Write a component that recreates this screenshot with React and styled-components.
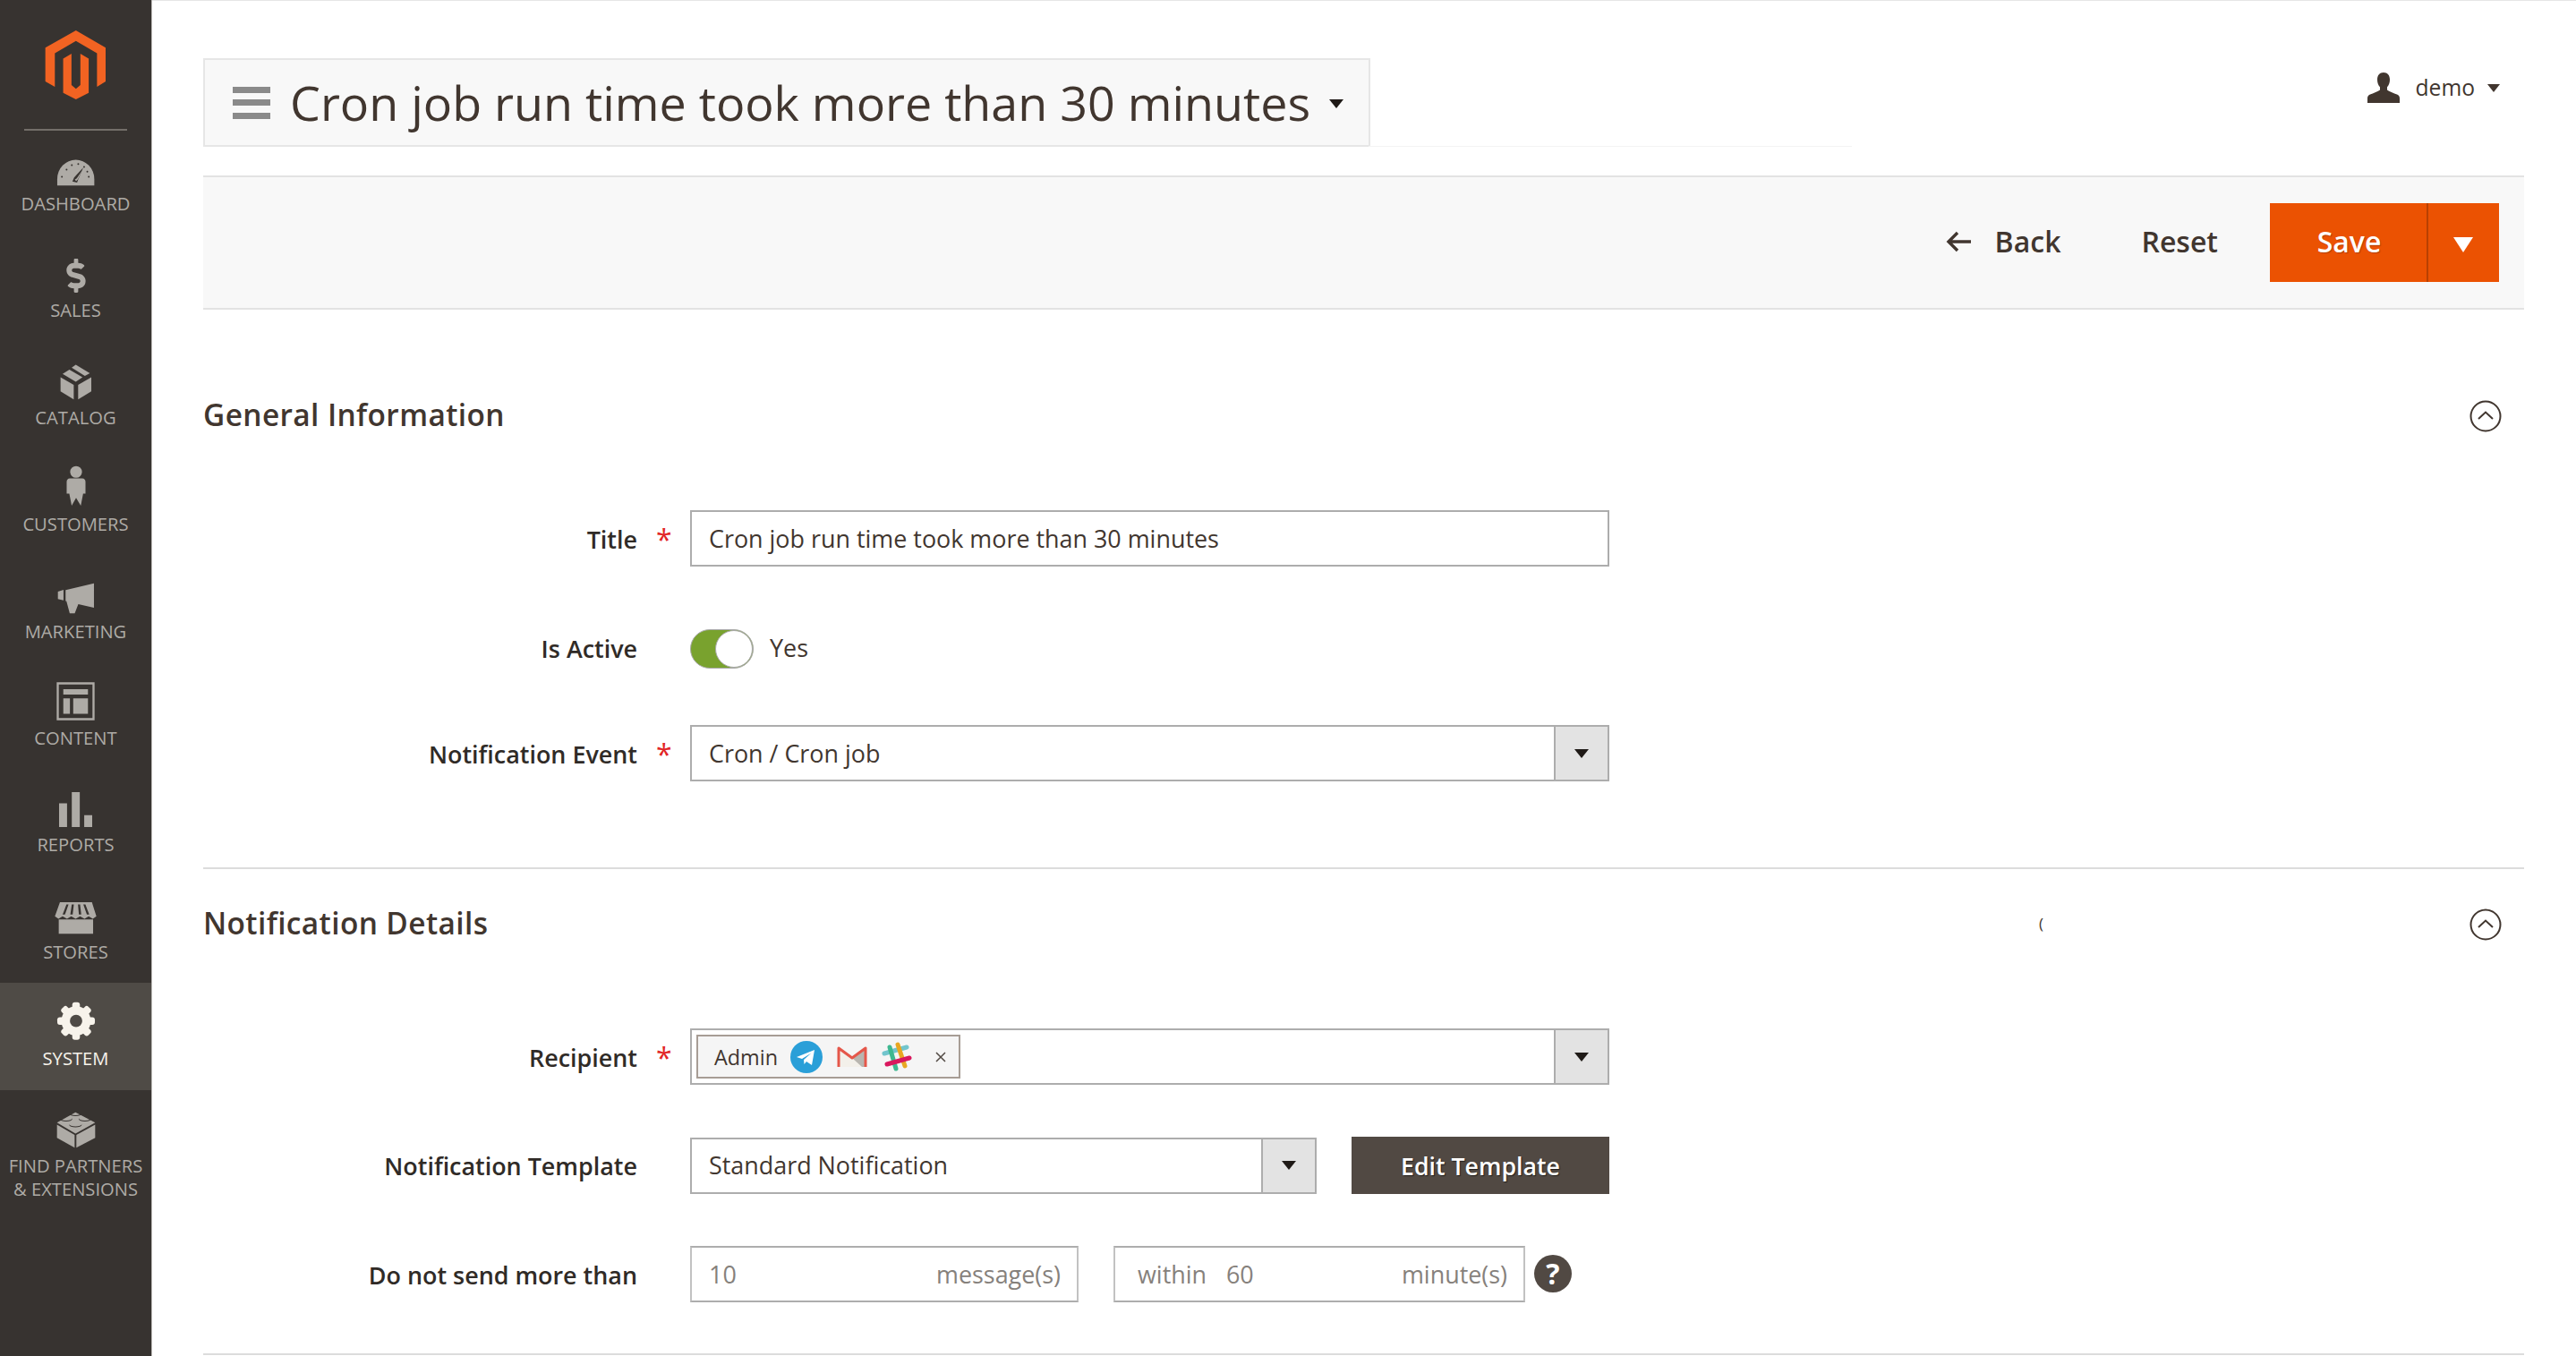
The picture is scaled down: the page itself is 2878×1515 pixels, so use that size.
import React from 'react';
import styled, { createGlobalStyle } from 'styled-components';
import { FaDollarSign } from 'react-icons/fa';

const GlobalStyle = createGlobalStyle`
  html, body {
    margin: 0;
    padding: 0;
    background: #fff;
  }
  body {
    font-family: "Open Sans", "Liberation Sans", sans-serif;
    color: #41362f;
  }
  * {
    box-sizing: border-box;
  }
`;

const Page = styled.div`
  display: flex;
  min-height: 1515px;
  height: 1515px;
  overflow: hidden;
`;

const Sidebar = styled.nav`
  flex: 0 0 170px;
  background: #373330;
  border-right: 1px solid #b9b7b4;
  display: flex;
  flex-direction: column;
  padding-top: 33px;
`;

const LogoWrap = styled.div`
  display: flex;
  justify-content: center;
  padding-right: 1px;
`;

const LogoDivider = styled.div`
  height: 2px;
  flex: none;
  margin: 32px 27px -3px;
  background: #736e69;
`;

const NavItem = styled.div`
  height: 119.4px;
  flex: none;
  display: flex;
  flex-direction: column;
  align-items: center;
  background: ${props => (props.$active ? '#4f4b46' : 'transparent')};
  color: ${props => (props.$active ? '#f7f3eb' : '#aeaba6')};
`;

const NavIcon = styled.div`
  height: 65px;
  flex: none;
  display: flex;
  align-items: flex-end;
  justify-content: center;
`;

const NavLabel = styled.div`
  margin-top: 6px;
  font-size: 20.2px;
  line-height: 26px;
  text-align: center;
  white-space: nowrap;
`;

const Main = styled.main`
  flex: 1;
  min-width: 0;
  padding: 0 58px 0 57px;
  border-top: 1px solid #e6e6e6;
`;

const HeaderRow = styled.header`
  display: flex;
  justify-content: space-between;
  align-items: flex-start;
  height: 195px;
  padding-top: 64px;
`;

const TitleBox = styled.div`
  position: relative;
  width: 1304px;
  height: 99px;
  display: flex;
  align-items: center;
  background: #f8f8f8;
  border: 2px solid #e6e6e6;
  padding-left: 31px;

  &::after {
    content: '';
    position: absolute;
    left: 100%;
    bottom: -2px;
    width: 540px;
    height: 1px;
    background: #f3f3f3;
  }
`;

const MenuBars = styled.div`
  width: 42px;
  height: 36px;
  display: flex;
  flex-direction: column;
  justify-content: space-between;
  margin-right: 22px;
  span {
    display: block;
    height: 7px;
    background: #8a8a8a;
  }
`;

const PageTitle = styled.h1`
  margin: 0 0 2px;
  font-size: 53.8px;
  font-weight: 400;
  line-height: 60px;
  white-space: nowrap;
  color: #41362f;
`;

const Caret = styled.span`
  display: block;
  width: 0;
  height: 0;
  border-left: ${props => props.$size}px solid transparent;
  border-right: ${props => props.$size}px solid transparent;
  border-top: ${props => props.$size * (props.$ratio || 1.25)}px solid ${props => props.$color || '#1f1a17'};
`;

const TitleCaret = styled.div`
  margin-left: 21px;
  margin-top: 2px;
`;

const UserMenu = styled.div`
  display: flex;
  align-items: center;
  margin: 16px 27px 0 0;
  font-size: 24.6px;
  line-height: 34px;
`;

const UserName = styled.span`
  margin: 0 14px 0 18px;
`;

const Toolbar = styled.div`
  height: 150px;
  display: flex;
  align-items: center;
  justify-content: flex-end;
  background: #f8f8f8;
  border-top: 2px solid #e3e3e3;
  border-bottom: 2px solid #e3e3e3;
  padding-right: 28px;
`;

const ToolbarLink = styled.div`
  display: flex;
  align-items: center;
  padding-bottom: 3px;
  font-size: 32px;
  font-weight: 600;
  color: #41362f;
  margin-right: ${props => props.$gap}px;
`;

const BackArrow = styled.svg`
  margin-right: 27px;
`;

const SplitButton = styled.div`
  display: flex;
  height: 88px;
  width: 256px;
  background: #eb5202;
  color: #fff;
`;

const SaveLabel = styled.div`
  flex: 0 0 175px;
  display: flex;
  align-items: center;
  justify-content: center;
  padding: 0 0 3px 2px;
  font-size: 32px;
  font-weight: 600;
  text-shadow: 1px 1px 1px rgba(0, 0, 0, 0.25);
`;

const SaveToggle = styled.div`
  flex: 1;
  display: flex;
  align-items: center;
  justify-content: center;
  border-left: 2px solid #b84002;
  padding: 4px 2px 0 0;
`;

const Section = styled.section`
  position: relative;
  padding-top: ${props => props.$top}px;
  height: ${props => props.$height}px;
  border-bottom: 2px solid #dcdcdc;
`;

const SectionHead = styled.div`
  display: flex;
  align-items: center;
  justify-content: space-between;
  height: 60px;
  padding-right: 25px;
`;

const SectionTitle = styled.h2`
  margin: 0;
  padding-top: 1px;
  font-size: 33.4px;
  font-weight: 600;
  line-height: 40px;
  letter-spacing: 0.4px;
  color: #41362f;
`;

const CollapseSvg = styled.svg`
  margin-top: 5px;
`;

const StrayMark = styled.span`
  position: absolute;
  left: 2051px;
  top: 51px;
  font-size: 17px;
  line-height: 20px;
  color: #41362f;
`;

const Row = styled.div`
  display: flex;
  align-items: center;
  margin-top: ${props => props.$top}px;
  min-height: 63px;
`;

const FieldLabel = styled.label`
  flex: 0 0 485px;
  padding-top: ${props => (props.$flat ? 0 : 2)}px;
  text-align: right;
  font-size: 26.9px;
  font-weight: 600;
  line-height: 34px;
  color: #302b27;
`;

const RequiredMark = styled.span`
  flex: 0 0 59px;
  padding: 3px 0 0 21px;
  font-size: 32px;
  line-height: 34px;
  color: #e22626;
`;

const ControlBox = styled.div`
  width: ${props => props.$width}px;
  height: 63px;
  display: flex;
  align-items: center;
  background: #fff;
  border: 2px solid #adadad;
  font-size: 26.9px;
  color: #41362f;
`;

const ControlText = styled.span`
  padding: 0 0 1px 19px;
  flex: 1;
  white-space: nowrap;
`;

const SelectButton = styled.div`
  flex: 0 0 60px;
  align-self: stretch;
  display: flex;
  align-items: center;
  justify-content: center;
  background: #e3e3e3;
  border-left: 2px solid #adadad;
`;

const ToggleTrack = styled.div`
  width: 71px;
  height: 44px;
  border-radius: 22px;
  background: #79a22e;
  position: relative;
  border: 1px solid #a9a9a9;
`;

const ToggleKnob = styled.span`
  position: absolute;
  top: 0;
  right: 0;
  width: 42px;
  height: 42px;
  border-radius: 50%;
  background: #fff;
  border: 1px solid #a9a9a9;
`;

const ToggleText = styled.span`
  margin-left: 18px;
  padding-bottom: 2px;
  font-size: 26.9px;
  color: #41362f;
`;

const Chips = styled.div`
  flex: 1;
  padding-left: 5px;
  display: flex;
  align-items: center;
`;

const Chip = styled.div`
  width: 295px;
  height: 49px;
  display: flex;
  align-items: center;
  background: #f5f5f5;
  border: 2px solid #a79d95;
  padding-left: 18px;
  font-size: 23.4px;
  color: #41362f;
`;

const ChipIcons = styled.div`
  display: flex;
  align-items: center;
  margin-left: 14px;
`;

const ChipClose = styled.svg`
  margin-left: 26px;
`;

const DarkButton = styled.div`
  width: 288px;
  height: 64px;
  margin-left: 39px;
  display: flex;
  align-items: center;
  justify-content: center;
  background: #514943;
  color: #fff;
  font-size: 26.7px;
  font-weight: 600;
  text-shadow: 1px 1px 1px rgba(0, 0, 0, 0.6);
`;

const AffixBox = styled.div`
  width: ${props => props.$width}px;
  height: 63px;
  margin-right: ${props => props.$gap || 0}px;
  display: flex;
  align-items: center;
  justify-content: space-between;
  background: #fff;
  border: 2px solid #c2c2c2;
  border-top-color: #adadad;
  border-bottom-color: #adadad;
  padding: 0 18px 0 ${props => props.$left}px;
  font-size: 26.9px;
  color: #86817c;
`;

const AffixValue = styled.span`
  margin-left: ${props => props.$left || 0}px;
`;

const AffixGroup = styled.span`
  display: flex;
`;

const HelpBadge = styled.div`
  width: 42px;
  height: 42px;
  margin: 0 0 2px 10px;
  border-radius: 50%;
  background: #514943;
  color: #fff;
  font-size: 32px;
  font-weight: 700;
  line-height: 42px;
  text-align: center;
`;

const Ico = ({ box, w, h, children }) => (
  <svg viewBox={box} width={w} height={h} fill="currentColor">{children}</svg>
);

const MagentoLogo = () => (
  <svg viewBox="150 98 208 236" width="69" height="79">
    <path
      fill="#f26322"
      d="M255 100 355 158V272L326 290V177L255 135 184 177V290L152 272V158Z M212 195 240 178V284L255 297 270 284V178L298 195V310L255 332 212 310Z"
    />
  </svg>
);

const gaugeDots = [[206, 590], [222, 565], [240, 550], [262, 546], [282, 556], [298, 590], [293, 572]];

const DashboardIcon = () => (
  <Ico box="188 530 130 92" w="43" h="30">
    <path d="M190 620V598A63 66 0 0 1 317 598V620Z" />
    {gaugeDots.map(([cx, cy]) => (
      <circle key={cx} cx={cx} cy={cy} r="3" fill="#373330" />
    ))}
    <path d="M279 558 262 598 258 610 242 606 248 592Z" fill="#373330" />
    <path d="M275 568 257 595 250 600 255 604 261 598Z" />
  </Ico>
);

const CatalogIcon = () => (
  <Ico box="198 1216 110 122" w="36" h="41">
    <path d="M200 1262 245 1288V1337L200 1310Z" />
    <path d="M260 1288 305 1262V1310L260 1337Z" />
    <path d="M207 1250 230 1236 275 1262 252 1277Z" />
    <path d="M238 1229 252 1219 300 1248 283 1257Z" />
  </Ico>
);

const CustomersIcon = () => (
  <Ico box="222 56 66 140" w="22" h="46">
    <circle cx="255" cy="78" r="20" />
    <path d="M234 100H276Q287 101 287 112V152H279L271 193 255 166 240 193 232 152H223V112Q223 101 234 100Z" />
  </Ico>
);

const MarketingIcon = () => (
  <Ico box="192 448 125 106" w="42" h="35">
    <path d="M193 478 212 472V508L193 503Z" />
    <path d="M219 473 315 450V533L262 521 250 552H233L222 511 219 510Z" />
  </Ico>
);

const ContentIcon = () => (
  <Ico box="190 786 128 128" w="43" h="43">
    <path fillRule="evenodd" d="M191 787H317V913H191ZM198 794V906H310V794Z" />
    <path d="M213 810H295V828H213ZM213 840H235V892H213ZM246 840H295V892H246Z" />
  </Ico>
);

const ReportsIcon = () => (
  <Ico box="198 1152 112 118" w="37" h="39">
    <path d="M198 1190H225V1270H198ZM241 1152H268V1270H241ZM283 1230H310V1270H283Z" />
  </Ico>
);

const StoresIcon = () => (
  <Ico box="182 26 142 110" w="47" h="37">
    <path d="M196 86H312V135H196Z" />
    <path
      fillRule="evenodd"
      d="M200 28H308L323 76 311 84 297 76 283 84 268 76 253 84 238 76 224 84 209 76 195 84 183 76Z M222 36 209 70H217L229 36Z M240 36 235 70H243L247 36Z M261 36 264 70H272L268 36Z M279 36 291 70H299L286 36Z"
    />
  </Ico>
);

const gearTeeth = [0, 45, 90, 135, 180, 225, 270, 315];

const SystemIcon = () => (
  <Ico box="186 362 134 132" w="44" h="44">
    <circle cx="253" cy="427" r="50" />
    {gearTeeth.map(a => (
      <rect key={a} x="240" y="363" width="26" height="30" rx="9" transform={`rotate(${a} 253 427)`} />
    ))}
    <circle cx="253" cy="427" r="21" fill="#4f4b46" />
  </Ico>
);

const PartnersIcon = () => (
  <Ico box="188 720 134 130" w="44" h="43">
    <path d="M190 770 250 805V848L190 815Z" />
    <path d="M256 805 320 770V815L256 848Z" />
    <path d="M190 763 253 728 320 763 253 800Z" />
    <g fill="#373330">
      <path d="M232 730a21 8 0 0 0 42 0v3a21 8 0 0 1-42 0Z" />
      <path d="M200 748a21 8 0 0 0 42 0v3a21 8 0 0 1-42 0Z" />
      <path d="M264 748a21 8 0 0 0 42 0v3a21 8 0 0 1-42 0Z" />
      <path d="M232 768a21 8 0 0 0 42 0v3a21 8 0 0 1-42 0Z" />
    </g>
  </Ico>
);

const UserIcon = () => (
  <svg viewBox="0 0 36 34" width="36" height="34" fill="#41362f">
    <path d="M18 0C13.5 0 11 3.2 11 8c0 3.6 1.2 6.4 3 8.2v3.2c-2 1.8-7 3.4-11.6 5.4C.8 25.6 0 27 0 29v5h36v-5c0-2-.8-3.4-2.4-4.2-4.6-2-9.6-3.6-11.6-5.4v-3.2c1.8-1.8 3-4.6 3-8.2 0-4.8-2.5-8-7-8Z" />
  </svg>
);

const CollapseIcon = () => (
  <CollapseSvg viewBox="0 0 36 36" width="36" height="36" fill="none" stroke="#41362f" strokeWidth="2">
    <circle cx="18" cy="18" r="16.5" />
    <path d="M10 21 18 13.5 26 21" />
  </CollapseSvg>
);

const TelegramIcon = () => (
  <svg viewBox="0 0 36 36" width="36" height="36">
    <circle cx="18" cy="18" r="18" fill="#2a9fd8" />
    <path fill="#fff" d="M7 18 27 10 24 27 18 23 15.5 26 15 21 23.5 13.5 13 20Z" />
  </svg>
);

const GmailIcon = () => (
  <svg viewBox="0 0 34 26" width="34" height="26" style={{ marginLeft: 16 }}>
    <path fill="#f3f0ea" d="M2 3 17 14 32 3V24H2Z" />
    <path fill="#b9b6b0" d="M32 4V24H28L17 14Z" />
    <path fill="none" stroke="#e5574a" strokeWidth="3" strokeLinejoin="round" d="M2 24V3L17 14 32 3V24" />
  </svg>
);

const SlackIcon = () => (
  <svg viewBox="0 0 34 34" width="34" height="34" fill="none" strokeWidth="5" strokeLinecap="round" style={{ marginLeft: 16 }}>
    <path stroke="#72c5cd" d="M3 13 28 6" />
    <path stroke="#3eb890" d="M9 6 16 30" />
    <path stroke="#e8a723" d="M18 3 26 27" />
    <path stroke="#d9185e" d="M6 25 31 18" />
  </svg>
);

const navItems = [
  { label: 'DASHBOARD', icon: <DashboardIcon /> },
  { label: 'SALES', icon: <FaDollarSign size={38} /> },
  { label: 'CATALOG', icon: <CatalogIcon /> },
  { label: 'CUSTOMERS', icon: <CustomersIcon /> },
  { label: 'MARKETING', icon: <MarketingIcon /> },
  { label: 'CONTENT', icon: <ContentIcon /> },
  { label: 'REPORTS', icon: <ReportsIcon /> },
  { label: 'STORES', icon: <StoresIcon /> },
  { label: 'SYSTEM', icon: <SystemIcon />, active: true },
  { label: <>FIND PARTNERS<br />&amp; EXTENSIONS</>, icon: <PartnersIcon /> },
];

const App = () => (
  <>
    <GlobalStyle />
    <Page>
      <Sidebar>
        <LogoWrap>
          <MagentoLogo />
        </LogoWrap>
        <LogoDivider />
        {navItems.map((item, i) => (
          <NavItem key={i} $active={item.active}>
            <NavIcon>{item.icon}</NavIcon>
            <NavLabel>{item.label}</NavLabel>
          </NavItem>
        ))}
      </Sidebar>

      <Main>
        <HeaderRow>
          <TitleBox>
            <MenuBars>
              <span />
              <span />
              <span />
            </MenuBars>
            <PageTitle>Cron job run time took more than 30 minutes</PageTitle>
            <TitleCaret>
              <Caret $size={8} />
            </TitleCaret>
          </TitleBox>
          <UserMenu>
            <UserIcon />
            <UserName>demo</UserName>
            <Caret $size={7.5} $color="#41362f" />
          </UserMenu>
        </HeaderRow>

        <Toolbar>
          <ToolbarLink $gap={90}>
            <BackArrow viewBox="0 0 28 24" width="28" height="24" fill="none" stroke="#41362f" strokeWidth="3.4">
              <path d="M13 2 3 12 13 22M3 12H28" />
            </BackArrow>
            Back
          </ToolbarLink>
          <ToolbarLink $gap={58}>Reset</ToolbarLink>
          <SplitButton>
            <SaveLabel>Save</SaveLabel>
            <SaveToggle>
              <Caret $size={11} $ratio={1.6} $color="#fff" />
            </SaveToggle>
          </SplitButton>
        </Toolbar>

        <Section $top={86} $height={625}>
          <SectionHead>
            <SectionTitle>General Information</SectionTitle>
            <CollapseIcon />
          </SectionHead>
          <Row $top={78}>
            <FieldLabel>Title</FieldLabel>
            <RequiredMark>*</RequiredMark>
            <ControlBox $width={1027}>
              <ControlText>Cron job run time took more than 30 minutes</ControlText>
            </ControlBox>
          </Row>
          <Row $top={60}>
            <FieldLabel $flat>Is Active</FieldLabel>
            <RequiredMark />
            <ToggleTrack>
              <ToggleKnob />
            </ToggleTrack>
            <ToggleText>Yes</ToggleText>
          </Row>
          <Row $top={54}>
            <FieldLabel>Notification Event</FieldLabel>
            <RequiredMark>*</RequiredMark>
            <ControlBox $width={1027}>
              <ControlText>Cron / Cron job</ControlText>
              <SelectButton>
                <Caret $size={8} />
              </SelectButton>
            </ControlBox>
          </Row>
        </Section>

        <Section $top={29} $height={543}>
          <SectionHead>
            <SectionTitle>Notification Details</SectionTitle>
            <CollapseIcon />
          </SectionHead>
          <StrayMark>(</StrayMark>
          <Row $top={89}>
            <FieldLabel>Recipient</FieldLabel>
            <RequiredMark>*</RequiredMark>
            <ControlBox $width={1027}>
              <Chips>
                <Chip>
                  Admin
                  <ChipIcons>
                    <TelegramIcon />
                    <GmailIcon />
                    <SlackIcon />
                  </ChipIcons>
                  <ChipClose viewBox="0 0 12 12" width="12" height="12" fill="none" stroke="#514943" strokeWidth="1.5">
                    <path d="M1 1 11 11M11 1 1 11" />
                  </ChipClose>
                </Chip>
              </Chips>
              <SelectButton>
                <Caret $size={8} />
              </SelectButton>
            </ControlBox>
          </Row>
          <Row $top={58}>
            <FieldLabel>Notification Template</FieldLabel>
            <RequiredMark />
            <ControlBox $width={700}>
              <ControlText>Standard Notification</ControlText>
              <SelectButton>
                <Caret $size={8} />
              </SelectButton>
            </ControlBox>
            <DarkButton>Edit Template</DarkButton>
          </Row>
          <Row $top={58}>
            <FieldLabel>Do not send more than</FieldLabel>
            <RequiredMark />
            <AffixBox $width={434} $gap={39} $left={19}>
              <span>10</span>
              <span>message(s)</span>
            </AffixBox>
            <AffixBox $width={460} $left={25}>
              <AffixGroup>
                within
                <AffixValue $left={22}>60</AffixValue>
              </AffixGroup>
              <span>minute(s)</span>
            </AffixBox>
            <HelpBadge>?</HelpBadge>
          </Row>
        </Section>
      </Main>
    </Page>
  </>
);

export default App;
